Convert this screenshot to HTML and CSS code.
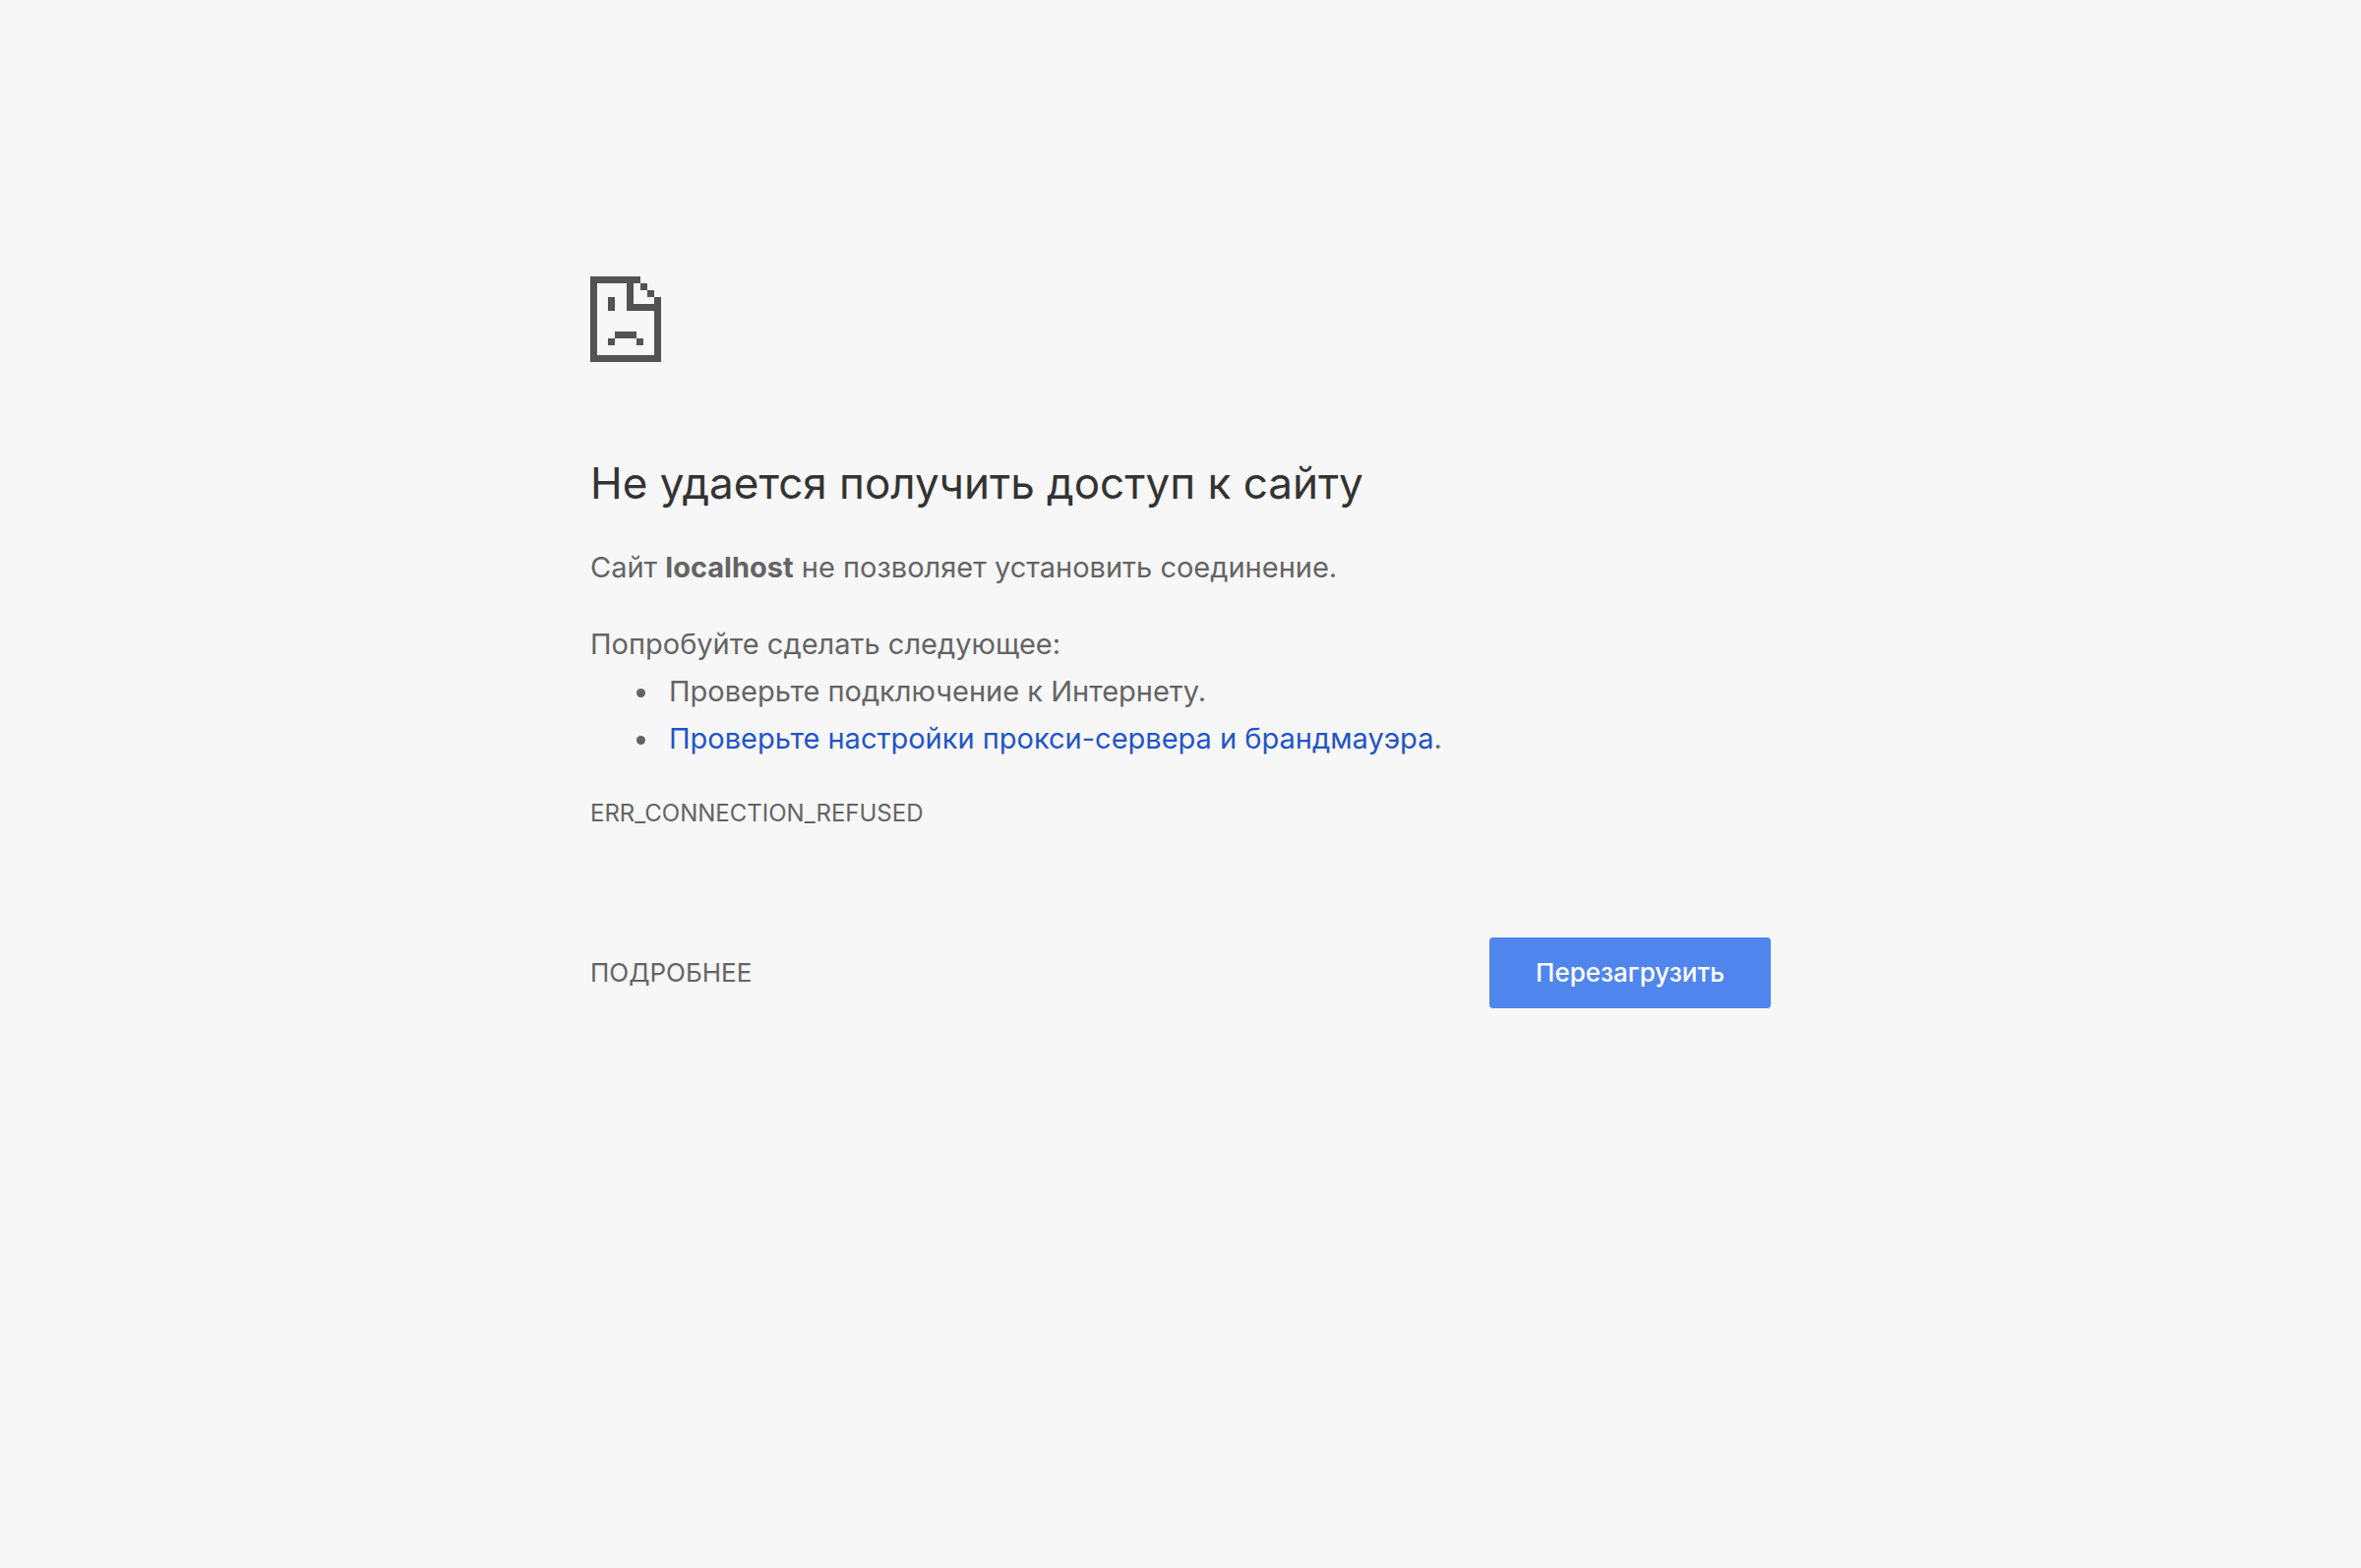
FILE: index.html
```
<!DOCTYPE html>
<html lang="ru">
<head>
<meta charset="utf-8">
<meta name="viewport" content="width=device-width, initial-scale=1">
<title>localhost</title>
<link rel="stylesheet" href="styles.css">
</head>
<body>
<main class="error-page">
  <svg class="error-icon" viewBox="0 0 72 87" aria-hidden="true" shape-rendering="crispEdges">
    <path d="M0 0H51V7H44V28H65V21H72V87H0ZM7 7V80H65V35H37V7ZM51 7H58V14H51ZM58 14H65V21H58ZM18 21H25V35H18ZM25 56H47V63H25ZM18 63H25V70H18ZM47 63H54V70H47Z" fill="currentColor" fill-rule="evenodd"/>
  </svg>
  <h1 class="title">Не удается получить доступ к сайту</h1>
  <p class="summary">Сайт <strong>localhost</strong> не позволяет установить соединение.</p>
  <section class="suggestions">
    <p class="suggestions-title">Попробуйте сделать следующее:</p>
    <ul class="suggestions-list">
      <li class="suggestion">Проверьте подключение к Интернету.</li>
      <li class="suggestion"><a class="link" href="#proxy">Проверьте настройки прокси-сервера и брандмауэра</a>.</li>
    </ul>
  </section>
  <p class="error-code">ERR_CONNECTION_REFUSED</p>
  <div class="actions">
    <button class="details-button" type="button">ПОДРОБНЕЕ</button>
    <button class="reload-button" type="button">Перезагрузить</button>
  </div>
</main>
</body>
</html>
```
FILE: styles.css
```
* {
  box-sizing: border-box;
}

body {
  margin: 0;
  background: #f7f7f7;
  color: #646464;
  font-family: Inter, "Liberation Sans", sans-serif;
  font-size: 29px;
  line-height: 48px;
}

.error-page {
  max-width: 1200px;
  margin: 0 auto;
  padding: 281px 0 64px;
}

.error-icon {
  display: block;
  width: 72px;
  height: 87px;
  color: #535353;
}

.title {
  margin: 93px 0 32px;
  color: #333;
  font-size: 44px;
  font-weight: 400;
  line-height: 60px;
}

.summary,
.suggestions-title {
  margin: 0;
}

.suggestions {
  margin-top: 30px;
}

.suggestions-list {
  margin: 0;
  padding-left: 72px;
}

.suggestion {
  padding-left: 8px;
}

.link {
  color: #1f55c7;
  text-decoration: none;
}

.error-code {
  margin: 32px 0 0;
  font-size: 24px;
  line-height: 40px;
}

.actions {
  display: flex;
  flex-wrap: wrap;
  align-items: center;
  justify-content: space-between;
  margin-top: 106px;
}

.details-button,
.reload-button {
  border: 0;
  font: inherit;
  font-size: 26px;
  line-height: 32px;
  cursor: pointer;
}

.details-button {
  padding: 20px 0;
  background: none;
  color: inherit;
}

.reload-button {
  padding: 20px 47px;
  border-radius: 4px;
  background: #5085ee;
  color: #fff;
  font-weight: 500;
}
```
